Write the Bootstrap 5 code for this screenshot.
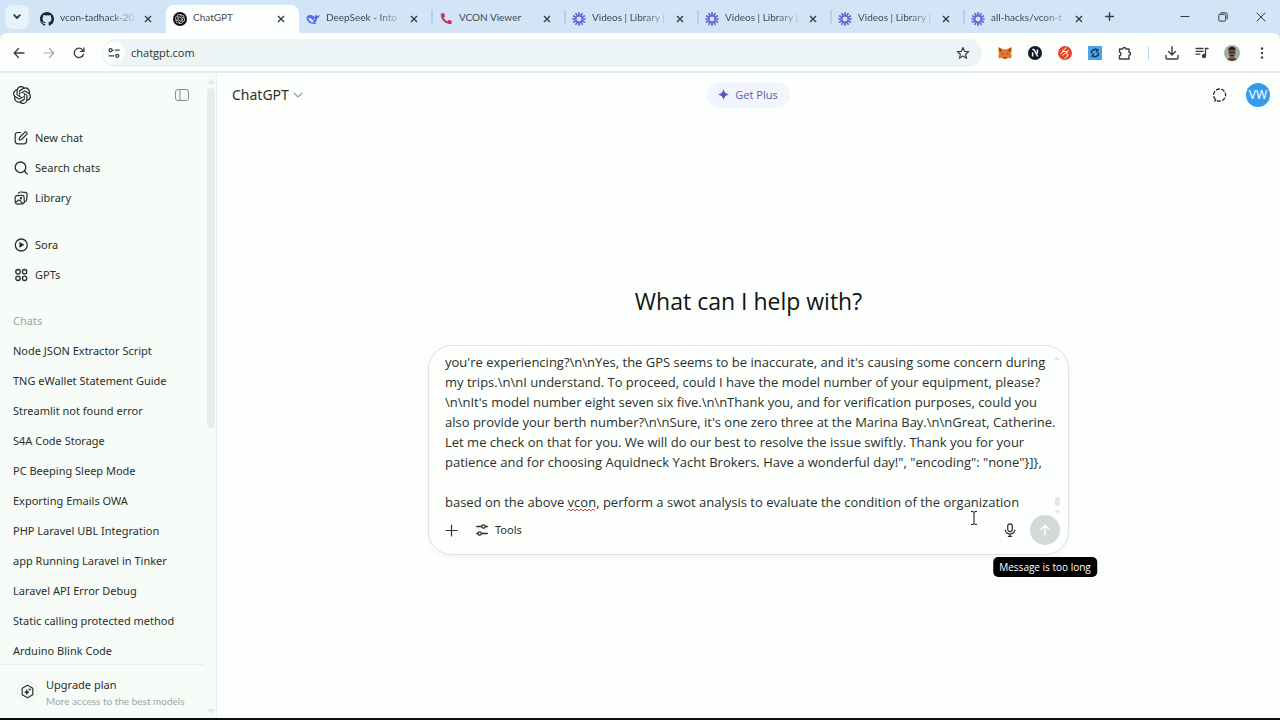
<!DOCTYPE html>
<html lang="en">
<head>
<meta charset="utf-8">
<meta name="viewport" content="width=device-width, initial-scale=1">
<title>ChatGPT</title>
<link href="https://cdn.jsdelivr.net/npm/bootstrap@5.3.0/dist/css/bootstrap.min.css" rel="stylesheet">
<style>
  body { font-family: "Noto Sans", "Open Sans", sans-serif; font-size: 11px; line-height: 20px; color: #2a2f2b; background: #fdfffd; }
  a { color: inherit; text-decoration: none; }
  button { border: 0; background: none; padding: 0; color: inherit; }
  svg { display: block; flex: none; }
  .line-icon { fill: none; stroke: currentColor; stroke-linecap: round; stroke-linejoin: round; }

  /* browser tab strip */
  .tab-strip { height: 33px; background: #d2e5f6; color: #2e3d49; }
  .tab-search { width: 24px; height: 24px; border-radius: 8px; background: #e8f2fa; margin: 0 4px 0 5px; }
  .tab-list { flex: 0 1 1064px; min-width: 0; }
  .browser-tab { position: relative; flex: 1 1 0; min-width: 0; height: 28px; padding: 0 14px 0 7px; margin-top: 5px; }
  .browser-tab + .browser-tab::before { content: ""; position: absolute; left: -1px; top: 5px; width: 2px; height: 14px; background: #b3d0f0; }
  .browser-tab.active { background: #fdfffd; border-radius: 8px 8px 0 0; color: #2c3230; }
  .browser-tab.active::before, .browser-tab.active + .browser-tab::before, .browser-tab:first-child::before { display: none; }
  .browser-tab svg, .browser-tab button { margin-top: -1px; }
  .browser-tab button svg { margin-top: 0; }
  .tab-title { flex: 1; min-width: 0; white-space: nowrap; font: 10px/20px Lato, sans-serif; margin: -4px 6px 0 6px; color: #3d4a54; }
  .tab-title.cut { -webkit-mask-image: linear-gradient(90deg, #000 65%, transparent); mask-image: linear-gradient(90deg, #000 65%, transparent); }
  .win-btn { width: 38px; height: 33px; }

  /* browser toolbar */
  .toolbar { height: 40px; background: #fdfffd; border-bottom: 2px solid #e6ebe8; padding: 1px 3px 0 4px; color: #3a3f3e; border-radius: 7px 7px 0 0; }
  .toolbar-wrap { background: #d2e5f6; }
  .tool-btn { width: 30px; height: 30px; }
  .omnibox { height: 28px; border-radius: 14px; background: #ecf4f5; margin: 0 8px; padding: 0 12px 0 1px; }
  .site-info { width: 22px; height: 22px; border-radius: 50%; background: #fdfffd; }
  .omnibox input { border: 0; outline: 0; background: transparent; font: 11px/20px "Open Sans", sans-serif; color: #2c3230; padding: 0 0 0 6px; }

  /* sidebar */
  .side { width: 217px; background: #f8fcf8; border-right: 1px solid #edf1ed; }
  .side-main { width: 204px; }
  .side-head { height: 43px; padding: 0 14px 0 13px; }
  .side-nav { padding-top: 7px; min-height: 0; }
  .side-group { margin-bottom: 17px; }
  .side-link { height: 30px; padding: 0 13px; gap: 6px; white-space: nowrap; }
  .side-label { color: #9aa29c; }
  .plan { border-top: 1px solid #e9eee9; height: 54px; padding: 0 12px 0 17px; gap: 8px; line-height: 18px; }
  .plan-mark { width: 21px; height: 21px; border-radius: 50%; border: 1px solid #e9eee9; }
  .plan-note { font: 10px/14px Lato, sans-serif; color: #a0a7a1; }
  .side-scroll { width: 12px; padding: 5px 1px 3px 3px; }
  .side-thumb { width: 8px; height: 340px; border-radius: 4px; background: #e8ede9; }

  /* main column */
  .main-head { height: 43px; padding: 0 10px; }
  .model { font-size: 14px; margin-left: 5px; }
  .plus-pill { height: 26px; border-radius: 13px; background: #f3f5fc; color: #5b57b5; padding: 0 12px 0 11px; gap: 6px; font: 500 11px/20px "Open Sans", sans-serif; }
  .avatar-vw { width: 24px; height: 24px; border-radius: 50%; background: #359bec; color: #fff; font-size: 12px; }
  .chat-mark { margin-right: 18px; }
  .hero { font: 400 23px/32px "Open Sans", sans-serif; margin: 0 0 28px; color: #101511; }
  .stage { padding-top: 6px; }
  .composer { width: 100%; max-width: 641px; border: 1px solid #dfe3df; border-radius: 24px; padding: 6px 8px 7px 16px; background: #fdfffd; box-shadow: 0 2px 5px #f1f4f1; }
  .prompt { display: block; width: 100%; height: 160px; border: 0; outline: 0; resize: none; overflow: hidden; padding: 0; background: transparent; color: #2b302c; font: 13px/20px "Open Sans", sans-serif; white-space: pre; }
  .spell { position: absolute; left: 122px; bottom: 0; }
  .mini-scroll { position: absolute; right: 0; top: 4px; bottom: -2px; width: 6px; }
  .composer-tools { height: 34px; margin-top: 1px; }
  .tools-btn { margin-left: 18px; gap: 7px; }
  .mic-btn { margin-right: 14px; }
  .send { width: 30px; height: 30px; border-radius: 50%; background: #d3d9d4; color: #f6faf6; }
  .tip { position: absolute; top: calc(100% + 12px); left: 50%; transform: translateX(-50%); background: #000; color: #fff; border-radius: 5px; padding: 0 6px; font: 500 10px/20px "Open Sans", sans-serif; white-space: nowrap; }
  .caret-mark { position: absolute; right: 82px; bottom: -13px; }
  .task-edge { height: 2px; background: #0a0d0b; }
</style>
</head>
<body class="d-flex flex-column vh-100 overflow-hidden">

<svg width="0" height="0" class="position-absolute" aria-hidden="true">
  <defs>
    <symbol id="x" viewBox="0 0 8 8"><path d="M1 1l6 6M7 1L1 7" stroke="#2e3d49" stroke-width="1.4" fill="none"/></symbol>
    <symbol id="burst" viewBox="-7 -7 14 14">
      <g stroke="#6461d8" stroke-width="1.7" stroke-linecap="round">
        <path d="M0-3.2V-6.2M0 3.2V6.2M3.2 0H6.2M-3.2 0H-6.2"/>
        <path d="M0-3.2V-6.2M0 3.2V6.2M3.2 0H6.2M-3.2 0H-6.2" transform="rotate(30)"/>
        <path d="M0-3.2V-6.2M0 3.2V6.2M3.2 0H6.2M-3.2 0H-6.2" transform="rotate(60)"/>
      </g>
      <circle r="3.4" fill="none" stroke="#6461d8" stroke-width="1"/>
    </symbol>
    <symbol id="knot" viewBox="0 0 24 24"><path d="M22.2819 9.8211a5.9847 5.9847 0 0 0-.5157-4.9108 6.0462 6.0462 0 0 0-6.5098-2.9A6.0651 6.0651 0 0 0 4.9807 4.1818a5.9847 5.9847 0 0 0-3.9977 2.9 6.0462 6.0462 0 0 0 .7427 7.0966 5.98 5.98 0 0 0 .511 4.9107 6.051 6.051 0 0 0 6.5146 2.9001A5.9847 5.9847 0 0 0 13.2599 24a6.0557 6.0557 0 0 0 5.7718-4.2058 5.9894 5.9894 0 0 0 3.9977-2.9001 6.0557 6.0557 0 0 0-.7475-7.0729zm-9.022 12.6081a4.4755 4.4755 0 0 1-2.8764-1.0408l.1419-.0804 4.7783-2.7582a.7948.7948 0 0 0 .3927-.6813v-6.7369l2.02 1.1686a.071.071 0 0 1 .038.052v5.5826a4.504 4.504 0 0 1-4.4945 4.4944zm-9.6607-4.1254a4.4708 4.4708 0 0 1-.5346-3.0137l.142.0852 4.783 2.7582a.7712.7712 0 0 0 .7806 0l5.8428-3.3685v2.3324a.0804.0804 0 0 1-.0332.0615L9.74 19.9502a4.4992 4.4992 0 0 1-6.1408-1.6464zM2.3408 7.8956a4.485 4.485 0 0 1 2.3655-1.9728V11.6a.7664.7664 0 0 0 .3879.6765l5.8144 3.3543-2.0201 1.1685a.0757.0757 0 0 1-.071 0l-4.8303-2.7865A4.504 4.504 0 0 1 2.3408 7.872zm16.5963 3.8558L13.1038 8.364 15.1192 7.2a.0757.0757 0 0 1 .071 0l4.8303 2.7913a4.4944 4.4944 0 0 1-.6765 8.1042v-5.6772a.79.79 0 0 0-.407-.667zm2.0107-3.0231l-.142-.0852-4.7735-2.7818a.7759.7759 0 0 0-.7854 0L9.409 9.2297V6.8974a.0662.0662 0 0 1 .0284-.0615l4.8303-2.7866a4.4992 4.4992 0 0 1 6.6802 4.66zM8.3065 12.863l-2.02-1.1638a.0804.0804 0 0 1-.038-.0567V6.0742a4.4992 4.4992 0 0 1 7.3757-3.4537l-.142.0805L8.704 5.459a.7948.7948 0 0 0-.3927.6813zm1.0976-2.3654l2.602-1.4998 2.6069 1.4998v2.9994l-2.5974 1.4997-2.6067-1.4997Z"/></symbol>
  </defs>
</svg>

<div class="tab-strip d-flex align-items-center flex-shrink-0">
  <button class="tab-search d-flex align-items-center justify-content-center" aria-label="Search tabs"><svg class="line-icon" width="8" height="6" viewBox="0 0 8 6" stroke-width="1.8"><path d="M1.2 1.2L4 4l2.8-2.8"/></svg></button>
  <div class="tab-list d-flex align-self-stretch">
    <div class="browser-tab d-flex align-items-center">
      <svg width="14" height="14" viewBox="0 0 16 16" fill="#1c2730"><path d="M8 0C3.58 0 0 3.58 0 8c0 3.54 2.29 6.53 5.47 7.59.4.07.55-.17.55-.38 0-.19-.01-.82-.01-1.49-2.01.37-2.53-.49-2.69-.94-.09-.23-.48-.94-.82-1.13-.28-.15-.68-.52-.01-.53.63-.01 1.08.58 1.23.82.72 1.21 1.87.87 2.33.66.07-.52.28-.87.51-1.07-1.78-.2-3.64-.89-3.64-3.95 0-.87.31-1.59.82-2.15-.08-.2-.36-1.02.08-2.12 0 0 .67-.21 2.2.82a7.4 7.4 0 0 1 4 0c1.53-1.04 2.2-.82 2.2-.82.44 1.1.16 1.92.08 2.12.51.56.82 1.27.82 2.15 0 3.07-1.87 3.75-3.65 3.95.29.25.54.73.54 1.48 0 1.07-.01 1.93-.01 2.2 0 .21.15.46.55.38A8.01 8.01 0 0 0 16 8c0-4.42-3.58-8-8-8z"/></svg>
      <span class="tab-title cut">vcon-tadhack-20</span><button aria-label="Close tab"><svg width="8" height="8"><use href="#x"/></svg></button>
    </div>
    <div class="browser-tab active d-flex align-items-center">
      <svg width="14" height="14" viewBox="0 0 14 14"><circle cx="7" cy="7" r="7" fill="#0b0d0c"/><use href="#knot" x="2" y="2" width="10" height="10" fill="#dfe4e1"/></svg>
      <span class="tab-title">ChatGPT</span><button aria-label="Close tab"><svg width="8" height="8"><use href="#x"/></svg></button>
    </div>
    <div class="browser-tab d-flex align-items-center">
      <svg width="14" height="14" viewBox="0 0 14 14"><path fill="#4d6bea" d="M.5 5.2C1.6 3 4 2.600 6 3.200c1.200.5 2 1.400 2.700 2.100.5-1 .2-2 .9-2.700.4.900 1.200 1.400 2 1.200.8-.1 1.400-.5 2.100-1-.1 1.800-1 3-2.400 3.300-.2 1.800-1 3.300-2.100 4.300l1.300.9c-1.500.8-3.200.7-4.700.3C3 11 .6 8.800.5 5.200z"/><path fill="#d2e5f6" d="M2.300 5.900c1.700-.5 3.700.8 4.700 2.500.5.900 1 1.500 1.600 1.800-2.800.7-5.700-1-6.300-4.300z"/><circle cx="8.200" cy="7.200" r=".8" fill="#d2e5f6"/></svg>
      <span class="tab-title cut">DeepSeek - Into</span><button aria-label="Close tab"><svg width="8" height="8"><use href="#x"/></svg></button>
    </div>
    <div class="browser-tab d-flex align-items-center">
      <svg width="14" height="14" viewBox="0 0 14 14"><path fill="#d02c62" d="M2.500 1.500l1.700-.4c.4-.1.700.1.900.5l.9 2.100c.1.300 0 .7-.2.900L4.600 5.600c.8 1.700 2.100 3 3.800 3.800l1-1.200c.2-.3.600-.4.900-.2l2.100.9c.4.2.6.500.5.900l-.4 1.700c-.1.400-.4.700-.8.700C6.300 12.200 1.800 7.600 1.800 2.300c0-.4.300-.7.700-.8z"/></svg>
      <span class="tab-title">VCON Viewer</span><button aria-label="Close tab"><svg width="8" height="8"><use href="#x"/></svg></button>
    </div>
    <div class="browser-tab d-flex align-items-center"><svg width="14" height="14"><use href="#burst"/></svg><span class="tab-title cut">Videos | Library |</span><button aria-label="Close tab"><svg width="8" height="8"><use href="#x"/></svg></button></div>
    <div class="browser-tab d-flex align-items-center"><svg width="14" height="14"><use href="#burst"/></svg><span class="tab-title cut">Videos | Library |</span><button aria-label="Close tab"><svg width="8" height="8"><use href="#x"/></svg></button></div>
    <div class="browser-tab d-flex align-items-center"><svg width="14" height="14"><use href="#burst"/></svg><span class="tab-title cut">Videos | Library |</span><button aria-label="Close tab"><svg width="8" height="8"><use href="#x"/></svg></button></div>
    <div class="browser-tab d-flex align-items-center"><svg width="14" height="14"><use href="#burst"/></svg><span class="tab-title cut">all-hacks/vcon-t</span><button aria-label="Close tab"><svg width="8" height="8"><use href="#x"/></svg></button></div>
  </div>
  <button class="ms-2" aria-label="New tab"><svg class="line-icon" width="9" height="9" viewBox="0 0 9 9" stroke-width="1.400"><path d="M4.500.7v7.600M.7 4.500h7.600"/></svg></button>
  <div class="d-flex ms-auto">
    <button class="win-btn d-flex align-items-center justify-content-center" aria-label="Minimize"><svg class="line-icon" width="10" height="10" viewBox="0 0 10 10"><path d="M1 4.500h8"/></svg></button>
    <button class="win-btn d-flex align-items-center justify-content-center" aria-label="Restore"><svg class="line-icon" width="10" height="10" viewBox="0 0 10 10"><rect x=".8" y="2.300" width="6.800" height="6.800" rx="1.200"/><path d="M3 .8h4.500q1.700 0 1.700 1.700V7"/></svg></button>
    <button class="win-btn d-flex align-items-center justify-content-center" aria-label="Close"><svg class="line-icon" width="10" height="10" viewBox="0 0 10 10"><path d="M1 1l8 8M9 1L1 9"/></svg></button>
  </div>
</div>

<div class="toolbar-wrap flex-shrink-0">
<div class="toolbar d-flex align-items-center">
  <button class="tool-btn d-flex align-items-center justify-content-center" aria-label="Back"><svg class="line-icon" width="12" height="12" viewBox="0 0 12 12" stroke-width="1.300"><path d="M11 6H1.500M5.500 1.500L1.200 6l4.300 4.500"/></svg></button>
  <button class="tool-btn d-flex align-items-center justify-content-center" aria-label="Forward"><svg class="line-icon" width="12" height="12" viewBox="0 0 12 12" stroke-width="1.200" color="#a4aaa8"><path d="M1 6h9.500M6.500 1.500L10.800 6l-4.300 4.500"/></svg></button>
  <button class="tool-btn d-flex align-items-center justify-content-center" aria-label="Reload"><svg class="line-icon" width="12" height="12" viewBox="0 0 12 12" stroke-width="1.300"><path d="M10.500 7.200A4.700 4.700 0 1 1 9.600 2.900L10.800 4.200M10.900 1v3.400H7.500"/></svg></button>
  <div class="omnibox d-flex align-items-center flex-grow-1">
    <button class="site-info d-flex align-items-center justify-content-center" aria-label="Site information"><svg class="line-icon" width="12" height="12" viewBox="0 0 12 12" stroke-width="1.300"><path d="M4.700 3.200H5M7.300 3.200h3.800M1 8.800h4.800"/><circle cx="2.600" cy="3.200" r="1.500"/><circle cx="9.300" cy="8.800" r="1.500"/></svg></button>
    <input class="flex-grow-1" type="text" value="chatgpt.com" aria-label="Address">
    <button aria-label="Bookmark"><svg class="line-icon" width="14" height="14" viewBox="0 0 14 14" stroke-width="1.200"><path d="M7 1.500l1.600 3.800 4.100.3-3.100 2.700 1 4L7 10.100l-3.600 2.200 1-4L1.300 5.600l4.100-.3z"/></svg></button>
  </div>
  <button class="tool-btn d-flex align-items-center justify-content-center" aria-label="Wallet extension"><svg width="14" height="12" viewBox="0 0 14 12"><path fill="#e4762b" d="M.6.300L5.300 2.200h3.400L13.400.3l.4 3-.8 3.200.7 2.600-.9 2.400-2.500-.7-1.600 1H5.300l-1.600-1-2.500.7-.9-2.400L1 6.500.2 3.300z"/><path fill="#9c3d12" d="M.6.300l3.700 3.200L2 5zM13.400.3L9.700 3.500 12 5zM5.300 10h3.400v1.400H5.300z"/><path fill="#3b2a22" d="M3.500 6.200l1.800.6-.3.900zM10.500 6.200l-1.800.6.3.9z"/></svg></button>
  <button class="tool-btn d-flex align-items-center justify-content-center" aria-label="Lambda extension"><svg width="14" height="14" viewBox="0 0 14 14"><circle cx="7" cy="7" r="7" fill="#0e1a2c"/><path d="M4.300 3.500h1.600l3.800 7M4.600 6.500v4M9.400 3.500v4" stroke="#fff" stroke-width="1.500" fill="none"/></svg></button>
  <button class="tool-btn d-flex align-items-center justify-content-center" aria-label="Brand extension"><svg width="14" height="14" viewBox="0 0 14 14"><circle cx="7" cy="7" r="7" fill="#e2492b"/><path d="M8.500 1.500L4 5.500h5L4.500 9.500M10.500 4L8 7.500q3 0 1.500 2.500L6.500 13M2.500 7.500l2-1" stroke="#fff" stroke-width="1" fill="none"/></svg></button>
  <button class="tool-btn d-flex align-items-center justify-content-center" aria-label="Sync extension"><svg width="14" height="14" viewBox="0 0 14 14"><path fill="#4da3ea" d="M0 0h14v14H0z"/><path d="M3.500 7.500A3.500 3.500 0 0 1 9.500 4.500L8 6.300M10.500 6.500A3.500 3.500 0 0 1 4.500 9.500L6 7.700M9.500 4.500l.8-1.300M4.500 9.500l-.8 1.300" stroke="#15324e" stroke-width="1.400" fill="none"/></svg></button>
  <button class="tool-btn d-flex align-items-center justify-content-center" aria-label="Extensions"><svg class="line-icon" width="14" height="14" viewBox="0 0 14 14" stroke-width="1.400"><path d="M1.500 3h3.300a1.500 1.500 0 0 1 3 0H11v3.300a1.500 1.500 0 0 1 0 3V13H1.500V9.800a1.900 1.900 0 0 0 0-3.700z"/></svg></button>
  <div class="d-flex justify-content-center px-2"><svg width="1" height="14"><path d="M0 0h1v14H0z" fill="#bcd9ea"/></svg></div>
  <button class="tool-btn d-flex align-items-center justify-content-center" aria-label="Downloads"><svg class="line-icon" width="14" height="14" viewBox="0 0 14 14" stroke-width="1.400"><path d="M7 .8v8M3.500 5.500L7 9l3.500-3.500M1 9.500v2.300q0 1.200 1.200 1.200h9.600q1.200 0 1.200-1.200V9.500"/></svg></button>
  <button class="tool-btn d-flex align-items-center justify-content-center" aria-label="Media controls"><svg class="line-icon" width="14" height="12" viewBox="0 0 14 12" stroke-width="1.300"><path d="M1 1.500h7M1 4.300h7M1 7.100h4M10.500 9V1.500H13"/><circle cx="9" cy="9" r="1.500" fill="#3a3f3e"/></svg></button>
  <button class="tool-btn d-flex align-items-center justify-content-center" aria-label="Profile"><svg width="16" height="16" viewBox="0 0 16 16"><clipPath id="face"><circle cx="8" cy="8" r="8"/></clipPath><g clip-path="url(#face)"><path fill="#a3aba6" d="M0 0h16v16H0z"/><path fill="#4c4540" d="M2.500 16q.5-3.600 5.500-3.600t5.500 3.600z"/><ellipse cx="8" cy="7.800" rx="3.500" ry="4.900" fill="#7a5242"/><path fill="#221e1c" d="M4.300 6.500C4 2.500 6 1.700 8 1.700s4 .8 3.700 4.800L11 4.800H5z"/><path d="M5.200 7.200h5.600M6.700 10.500h2.600" stroke="#2c201b"/></g></svg></button>
  <button class="tool-btn d-flex align-items-center justify-content-center" aria-label="Menu"><svg width="4" height="12" viewBox="0 0 4 12" fill="#3a3f3e"><circle cx="2" cy="1.500" r="1.200"/><circle cx="2" cy="6" r="1.200"/><circle cx="2" cy="10.500" r="1.200"/></svg></button>
</div>
</div>

<div class="d-flex flex-grow-1" style="min-height:0">
  <aside class="side d-flex flex-shrink-0">
    <div class="side-main d-flex flex-column">
      <div class="side-head d-flex align-items-center justify-content-between flex-shrink-0">
        <a href="#" aria-label="Home"><svg width="18" height="18" fill="#1d211e"><use href="#knot"/></svg></a>
        <button aria-label="Close sidebar"><svg class="line-icon" width="16" height="14" viewBox="0 0 16 14" color="#858d87"><rect x="1.500" y="1.500" width="13" height="11" rx="2.500"/><path d="M6 1.500v11"/></svg></button>
      </div>
      <nav class="side-nav flex-grow-1 overflow-hidden">
        <div class="side-group">
          <a class="side-link d-flex align-items-center" href="#"><svg class="line-icon" width="16" height="16" viewBox="0 0 16 16" stroke-width="1.200"><path d="M7.500 2.500H5Q2.200 2.500 2.200 5.300V11Q2.200 13.800 5 13.800h5.800q2.800 0 2.800-2.800V8.500"/><path d="M6.200 9.900l.4-2.400 5.300-5.300a1.450 1.450 0 0 1 2 2L8.600 9.500z"/></svg>New chat</a>
          <a class="side-link d-flex align-items-center" href="#"><svg class="line-icon" width="16" height="16" viewBox="0 0 16 16" stroke-width="1.300"><circle cx="7.500" cy="7.300" r="5.300"/><path d="M11.400 11.200l2.800 2.800"/></svg>Search chats</a>
          <a class="side-link d-flex align-items-center" href="#"><svg class="line-icon" width="16" height="16" viewBox="0 0 16 16" stroke-width="1.200"><rect x="2.200" y="5.500" width="9" height="8.500" rx="2" transform="rotate(-4 6.500 9.700)"/><path d="M5.500 3.200Q5.900 1.900 7.500 2l4.500.4q2.300.3 2.100 2.500l-.5 5q-.1 1.200-1 1.500M2.800 12.400l2.500-2.200q1.200-.5 2.200.7l2 2.500"/><circle cx="8" cy="8.200" r=".6"/></svg>Library</a>
        </div>
        <div class="mb-3">
          <a class="side-link d-flex align-items-center" href="#"><svg class="line-icon" width="16" height="16" viewBox="0 0 16 16" stroke-width="1.300"><circle cx="8.300" cy="8" r="6"/><path d="M6.800 5.800v4.400L10.500 8z" fill="#1d211e" stroke-width=".8"/></svg>Sora</a>
          <a class="side-link d-flex align-items-center" href="#"><svg class="line-icon" width="16" height="16" viewBox="0 0 16 16" stroke-width="1.300"><circle cx="5" cy="4.700" r="2.200"/><circle cx="11.600" cy="4.700" r="2.200"/><circle cx="5" cy="11.300" r="2.200"/><circle cx="11.600" cy="11.300" r="2.200"/></svg>GPTs</a>
        </div>
        <div class="side-link side-label d-flex align-items-center">Chats</div>
        <a class="side-link d-flex align-items-center" href="#">Node JSON Extractor Script</a>
        <a class="side-link d-flex align-items-center" href="#">TNG eWallet Statement Guide</a>
        <a class="side-link d-flex align-items-center" href="#">Streamlit not found error</a>
        <a class="side-link d-flex align-items-center" href="#">S4A Code Storage</a>
        <a class="side-link d-flex align-items-center" href="#">PC Beeping Sleep Mode</a>
        <a class="side-link d-flex align-items-center" href="#">Exporting Emails OWA</a>
        <a class="side-link d-flex align-items-center" href="#">PHP Laravel UBL Integration</a>
        <a class="side-link d-flex align-items-center" href="#">app Running Laravel in Tinker</a>
        <a class="side-link d-flex align-items-center" href="#">Laravel API Error Debug</a>
        <a class="side-link d-flex align-items-center" href="#">Static calling protected method</a>
        <a class="side-link d-flex align-items-center" href="#">Arduino Blink Code</a>
      </nav>
      <a class="plan d-flex align-items-center flex-shrink-0" href="#">
        <span class="plan-mark d-flex align-items-center justify-content-center"><svg class="line-icon" width="15" height="15" viewBox="0 0 15 15" stroke-width="1.200"><path d="M7.500 1.200l5.300 3v6.600l-5.300 3-5.300-3V4.200z"/><path d="M6.800 6l.6 1.600L9 8.200l-1.600.6-.6 1.600-.6-1.600-1.600-.6 1.600-.6zM9.800 4.600v1.800M8.900 5.500h1.800" stroke-width=".8" fill="#1d211e"/></svg></span>
        <span><span class="d-block">Upgrade plan</span><span class="plan-note d-block text-nowrap">More access to the best models</span></span>
      </a>
    </div>
    <div class="side-scroll d-flex flex-column align-items-center justify-content-between">
      <div><svg width="8" height="6" class="mb-1"><path d="M0 6l4-5 4 5z" fill="#e4e9e5"/></svg><div class="side-thumb"></div></div>
      <svg width="8" height="6"><path d="M0 0l4 5 4-5z" fill="#e4e9e5"/></svg>
    </div>
  </aside>

  <main class="flex-grow-1 d-flex flex-column">
    <header class="main-head d-flex align-items-center">
      <div class="col d-flex"><button class="model d-flex align-items-center gap-1">ChatGPT<svg class="line-icon" width="10" height="6" viewBox="0 0 10 6" color="#9aa29c" stroke-width="1.100"><path d="M1 1l4 4 4-4"/></svg></button></div>
      <button class="plus-pill d-flex align-items-center"><svg width="11" height="11" viewBox="0 0 12 12" fill="#5b57b5"><path d="M6 0q.9 5.100 6 6-5.100.9-6 6-.9-5.100-6-6 5.100-.9 6-6z"/></svg>Get Plus</button>
      <div class="col d-flex align-items-center justify-content-end">
        <button class="chat-mark" aria-label="Temporary chat"><svg class="line-icon" width="16" height="16" viewBox="0 0 16 16" stroke-width="1.300"><path d="M3.300 12.200A6 6 0 1 1 8 14H2.800l1-1.300" stroke-dasharray="2.900 2.400"/></svg></button>
        <button class="avatar-vw d-flex align-items-center justify-content-center" aria-label="Account">VW</button>
      </div>
    </header>
    <section class="stage flex-grow-1 d-flex flex-column align-items-center justify-content-center">
      <h1 class="hero">What can I help with?</h1>
      <form class="composer" onsubmit="return false">
        <div class="position-relative">
          <textarea class="prompt" aria-label="Message" spellcheck="false">you're experiencing?\n\nYes, the GPS seems to be inaccurate, and it's causing some concern during
my trips.\n\nI understand. To proceed, could I have the model number of your equipment, please?
\n\nIt's model number eight seven six five.\n\nThank you, and for verification purposes, could you
also provide your berth number?\n\nSure, it's one zero three at the Marina Bay.\n\nGreat, Catherine.
Let me check on that for you. We will do our best to resolve the issue swiftly. Thank you for your
patience and for choosing Aquidneck Yacht Brokers. Have a wonderful day!", "encoding": "none"}]},

based on the above vcon, perform a swot analysis to evaluate the condition of the organization</textarea>
          <svg class="spell" width="30" height="4" viewBox="0 0 30 4" fill="none" stroke="#d8504a"><path d="M0 3l2-2 2 2 2-2 2 2 2-2 2 2 2-2 2 2 2-2 2 2 2-2 2 2 2-2 2 2"/></svg>
          <div class="mini-scroll d-flex flex-column align-items-center">
            <svg width="6" height="4" class="mb-auto"><path d="M0 4l3-4 3 4z" fill="#e1e6e2"/></svg>
            <svg width="5" height="9" class="mb-1"><rect width="5" height="9" rx="2" fill="#e1e6e2"/></svg>
            <svg width="5" height="4"><path d="M0 0h5L2.500 4z" fill="#e1e6e2"/></svg>
          </div>
          <svg class="caret-mark" width="8" height="14" viewBox="0 0 8 14" fill="none" stroke="#111"><path d="M1 .6h2l1 .9 1-.9h2M4 1.500v11M1 13.400h2l1-.9 1 .9h2"/></svg>
        </div>
        <div class="composer-tools d-flex align-items-center">
          <button type="button" aria-label="Add"><svg class="line-icon" width="13" height="13" viewBox="0 0 13 13" stroke-width="1.200"><path d="M6.500 1v11M1 6.500h11"/></svg></button>
          <button type="button" class="tools-btn d-flex align-items-center"><svg class="line-icon" width="12" height="14" viewBox="0 0 12 14" stroke-width="1.300"><path d="M.7 3.500h4.800M9.500 3.500h1.800M.7 10.500h1M5.700 10.500h5.600"/><circle cx="7.500" cy="3.500" r="1.700"/><circle cx="3.700" cy="10.500" r="1.700"/></svg>Tools</button>
          <button type="button" class="mic-btn ms-auto" aria-label="Dictate"><svg class="line-icon" width="12" height="14" viewBox="0 0 12 14" stroke-width="1.200"><rect x="3.700" y=".8" width="4.600" height="7.800" rx="2.300"/><path d="M1.200 7.200q.8 3.800 4.800 3.800t4.800-3.800M6 11v2.400M4.300 13.300h3.400"/></svg></button>
          <div class="position-relative">
            <button class="send d-flex align-items-center justify-content-center" aria-label="Send"><svg class="line-icon" width="12" height="12" viewBox="0 0 12 12" stroke-width="1.600"><path d="M6 11V1.500M2 5.400l4-4 4 4"/></svg></button>
            <div class="tip" role="tooltip">Message is too long</div>
          </div>
        </div>
      </form>
    </section>
  </main>
</div>
<div class="task-edge flex-shrink-0"></div>

<script src="https://cdn.jsdelivr.net/npm/bootstrap@5.3.0/dist/js/bootstrap.bundle.min.js"></script>
</body>
</html>
